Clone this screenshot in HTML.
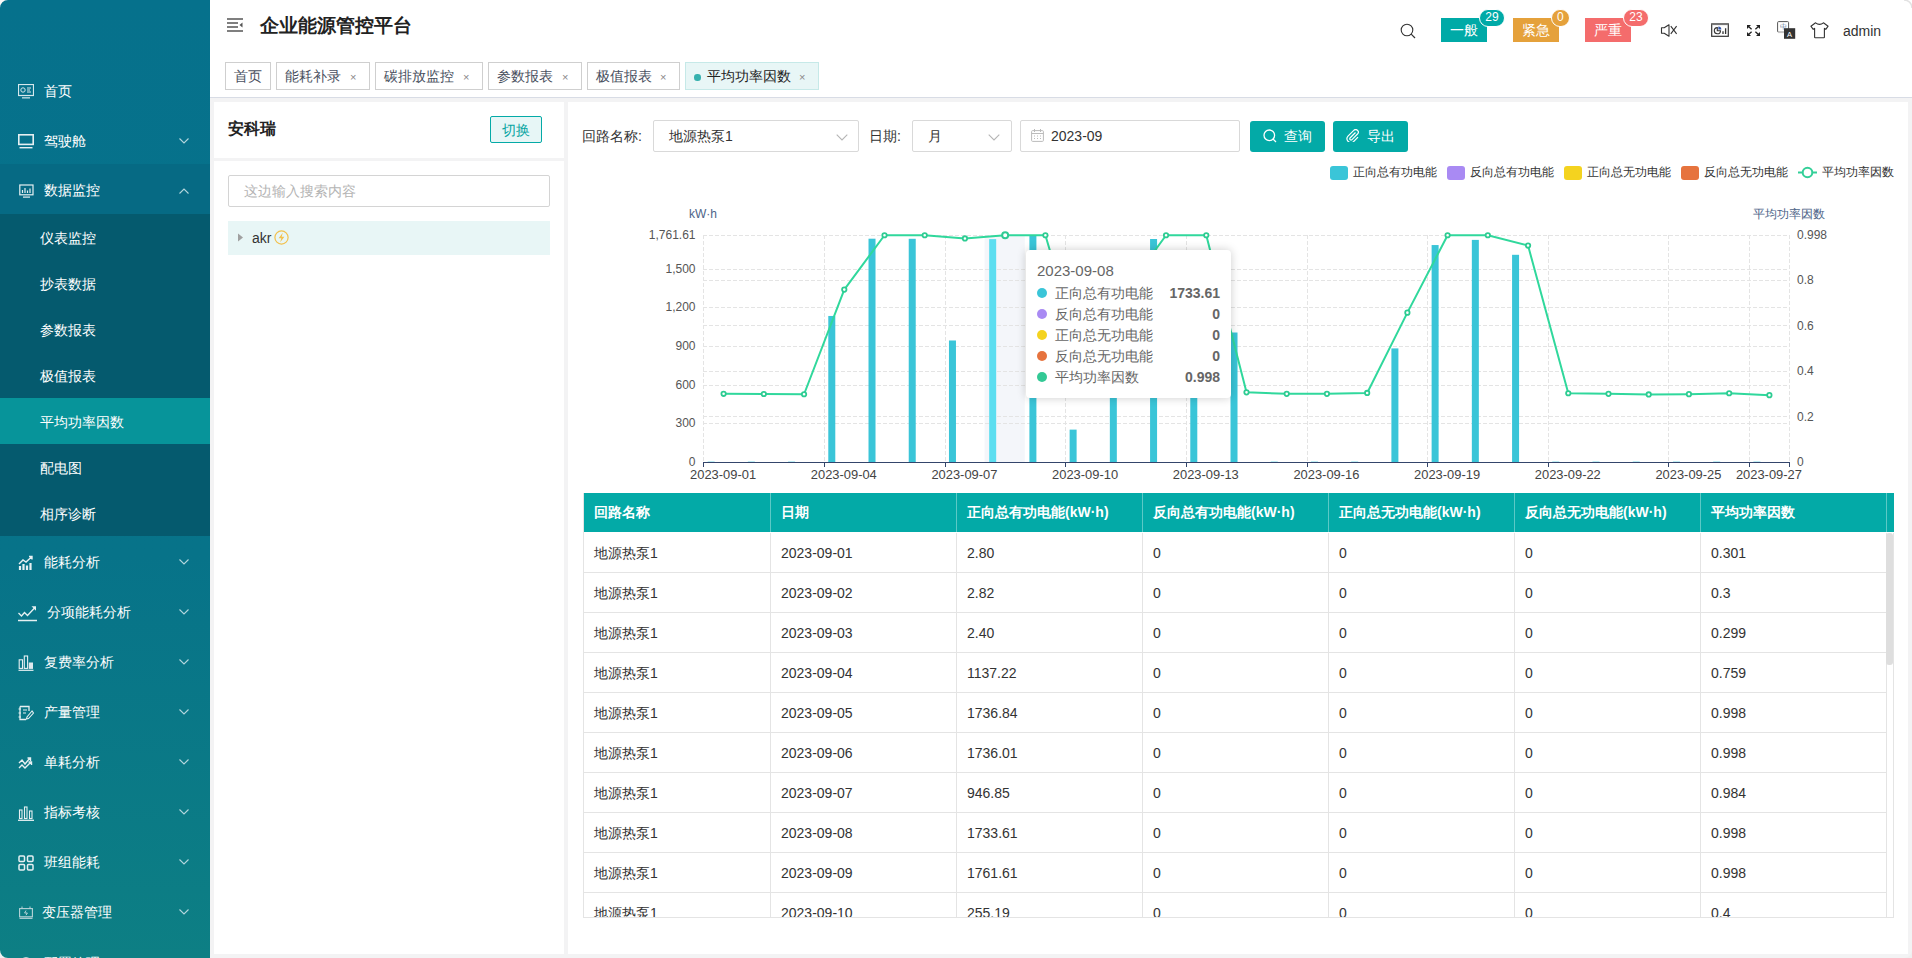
<!DOCTYPE html><html><head><meta charset="utf-8"><style>
*{box-sizing:border-box;margin:0;padding:0}
html,body{width:1912px;height:958px;overflow:hidden}
body{position:relative;background:#fff;font-family:'Liberation Sans',sans-serif;color:#333;font-size:14px}
.abs{position:absolute}
#side{position:absolute;left:0;top:0;width:210px;height:958px;background:linear-gradient(180deg,#06718c 0%,#077389 58%,#0d7f84 100%);overflow:hidden}
.mi{position:absolute;left:0;width:210px;height:50px;color:#fff;font-size:14px;line-height:50px}
.mi .t{position:absolute;left:44px;top:1px}
.mi svg.ic{position:absolute;left:18px;top:19px}
.mi .ar{position:absolute;left:179px;top:23px;width:10px;height:6px}
.si{position:absolute;left:0;width:210px;height:46px;color:#fff;font-size:14px;line-height:49px;padding-left:40px}
#hdr{position:absolute;left:210px;top:0;width:1702px;height:55px;background:#fff}
.tab{position:absolute;top:62px;height:28px;border:1px solid #cfcfcf;background:#fff;color:#495060;font-size:14px;line-height:26px;padding-left:8px}
.tab .x{position:absolute;top:1px;font-size:11px;color:#888}
#content{position:absolute;left:210px;top:98px;width:1702px;height:860px;background:#f3f3f4}
.card{position:absolute;background:#fff}
</style></head><body><div id="side">
<div class="abs" style="left:0;top:164px;width:210px;height:50px;background:#066a84"></div>
<div class="mi" style="top:65px"><svg class="ic" width="16" height="16" viewBox="0 0 16 16"><rect x="0.5" y="0.5" width="15" height="11" fill="none" stroke="#d6e8ec" stroke-width="1.2"/><rect x="4" y="13" width="8" height="1.6" fill="#9ccad4"/><circle cx="5" cy="6" r="2.2" fill="none" stroke="#d6e8ec" stroke-width="1"/><path d="M9 4h4M9 6h3M9 8h4" stroke="#d6e8ec" stroke-width="1"/></svg><span class="t">首页</span></div>
<div class="mi" style="top:115px"><svg class="ic" width="16" height="16" viewBox="0 0 16 16"><rect x="0.8" y="0.8" width="14.4" height="9.6" fill="none" stroke="#e6f0f2" stroke-width="1.6"/><rect x="1.5" y="13" width="13" height="1.4" fill="#e6f0f2"/></svg><span class="t">驾驶舱</span><svg class="ar" viewBox="0 0 10 6"><path d="M0.5 0.5 L5 5 L9.5 0.5" fill="none" stroke="#b4d6dd" stroke-width="1.1"/></svg></div>
<div class="mi" style="top:164px"><svg class="ic" width="16" height="16" viewBox="0 0 16 16"><rect x="1.8" y="2" width="13.2" height="9.8" fill="none" stroke="#e6f0f2" stroke-width="1.2"/><path d="M4.5 10V7M7 10V5M9.5 10V7.5M12 10V5.5" stroke="#e6f0f2" stroke-width="1.2"/><rect x="5" y="13.5" width="7" height="1.2" fill="#e6f0f2"/></svg><span class="t">数据监控</span><svg class="ar" style="top:24px" viewBox="0 0 10 6"><path d="M0.5 5.5 L5 1 L9.5 5.5" fill="none" stroke="#b4d6dd" stroke-width="1.1"/></svg></div>
<div class="abs" style="left:0;top:214px;width:210px;height:322px;background:#055a6e"></div>
<div class="si" style="top:214px;">仪表监控</div>
<div class="si" style="top:260px;">抄表数据</div>
<div class="si" style="top:306px;">参数报表</div>
<div class="si" style="top:352px;">极值报表</div>
<div class="si" style="top:398px;background:#07949a;">平均功率因数</div>
<div class="si" style="top:444px;">配电图</div>
<div class="si" style="top:490px;">相序诊断</div>
<div class="mi" style="top:536px"><svg class="ic" width="16" height="16" viewBox="0 0 16 16"><path d="M1 9L5 5L8 7L14 1.5M11 1.5H14V4.5" fill="none" stroke="#e6f0f2" stroke-width="1.4"/><path d="M2 15V11M5.5 15V9M9 15V10.5M12.5 15V8" stroke="#e6f0f2" stroke-width="2.2"/></svg><span class="t" style="left:44px">能耗分析</span><svg class="ar" viewBox="0 0 10 6"><path d="M0.5 0.5 L5 5 L9.5 0.5" fill="none" stroke="#b4d6dd" stroke-width="1.1"/></svg></div>
<div class="mi" style="top:586px"><svg class="ic" width="19" height="17" viewBox="0 0 19 17" style="left:18px;top:19px"><path d="M0.5 8L3.5 11L6.5 7.5L9.5 10.5L17 2.5" fill="none" stroke="#e6f0f2" stroke-width="1.3"/><path d="M13.5 1.2H18V5.7Z" fill="#e6f0f2"/><path d="M0 15.5H19" stroke="#e6f0f2" stroke-width="1.5"/></svg><span class="t" style="left:47px">分项能耗分析</span><svg class="ar" viewBox="0 0 10 6"><path d="M0.5 0.5 L5 5 L9.5 0.5" fill="none" stroke="#b4d6dd" stroke-width="1.1"/></svg></div>
<div class="mi" style="top:636px"><svg class="ic" width="16" height="16" viewBox="0 0 16 16"><rect x="1.2" y="4.8" width="3.3" height="8.6" fill="none" stroke="#e6f0f2" stroke-width="1.1"/><rect x="6.3" y="1" width="3.3" height="12.4" fill="none" stroke="#e6f0f2" stroke-width="1.1"/><rect x="10.8" y="7.5" width="4.2" height="6.4" fill="#dfe9ee"/><path d="M0.5 15.3H15.5" stroke="#e6f0f2" stroke-width="1.2"/></svg><span class="t" style="left:44px">复费率分析</span><svg class="ar" viewBox="0 0 10 6"><path d="M0.5 0.5 L5 5 L9.5 0.5" fill="none" stroke="#b4d6dd" stroke-width="1.1"/></svg></div>
<div class="mi" style="top:686px"><svg class="ic" width="16" height="16" viewBox="0 0 16 16"><path d="M2 1.5H11V6M2 1.5V14.5H8" fill="none" stroke="#e6f0f2" stroke-width="1.3"/><path d="M0.5 4H3M0.5 8H3M0.5 12H3" stroke="#e6f0f2" stroke-width="1.1"/><path d="M14 6L9 12L8.5 14L10.5 13.5L15.5 8Z" fill="none" stroke="#e6f0f2" stroke-width="1.1"/><path d="M5 5H9M5 8H8" stroke="#e6f0f2" stroke-width="1"/></svg><span class="t" style="left:44px">产量管理</span><svg class="ar" viewBox="0 0 10 6"><path d="M0.5 0.5 L5 5 L9.5 0.5" fill="none" stroke="#b4d6dd" stroke-width="1.1"/></svg></div>
<div class="mi" style="top:736px"><svg class="ic" width="16" height="16" viewBox="0 0 16 16"><path d="M1 8L4 5L7 9L12 3M9.5 3H12.5V6" fill="none" stroke="#e6f0f2" stroke-width="1.4"/><path d="M1 13L4 10L7 13L13 7M10.5 7H13.5V10" fill="none" stroke="#e6f0f2" stroke-width="1.4"/></svg><span class="t" style="left:44px">单耗分析</span><svg class="ar" viewBox="0 0 10 6"><path d="M0.5 0.5 L5 5 L9.5 0.5" fill="none" stroke="#b4d6dd" stroke-width="1.1"/></svg></div>
<div class="mi" style="top:786px"><svg class="ic" width="16" height="16" viewBox="0 0 16 16"><rect x="1.5" y="5" width="2.5" height="8.5" fill="none" stroke="#e6f0f2" stroke-width="1.1"/><rect x="6.5" y="2" width="2.5" height="11.5" fill="none" stroke="#e6f0f2" stroke-width="1.1"/><rect x="11.5" y="6" width="2.5" height="7.5" fill="none" stroke="#e6f0f2" stroke-width="1.1"/><path d="M0 15.3H16" stroke="#e6f0f2" stroke-width="1.3"/></svg><span class="t" style="left:44px">指标考核</span><svg class="ar" viewBox="0 0 10 6"><path d="M0.5 0.5 L5 5 L9.5 0.5" fill="none" stroke="#b4d6dd" stroke-width="1.1"/></svg></div>
<div class="mi" style="top:836px"><svg class="ic" width="16" height="16" viewBox="0 0 16 16"><rect x="1" y="1" width="5.5" height="5.5" rx="1" fill="none" stroke="#e6f0f2" stroke-width="1.5"/><rect x="9.5" y="1" width="5.5" height="5.5" rx="1" fill="none" stroke="#e6f0f2" stroke-width="1.5"/><rect x="1" y="9.5" width="5.5" height="5.5" rx="1" fill="none" stroke="#e6f0f2" stroke-width="1.5"/><rect x="9.5" y="9.5" width="5.5" height="5.5" rx="1" fill="none" stroke="#e6f0f2" stroke-width="1.5"/></svg><span class="t" style="left:44px">班组能耗</span><svg class="ar" viewBox="0 0 10 6"><path d="M0.5 0.5 L5 5 L9.5 0.5" fill="none" stroke="#b4d6dd" stroke-width="1.1"/></svg></div>
<div class="mi" style="top:886px"><svg class="ic" width="14" height="13" viewBox="0 0 14 13" style="left:19px;top:20px"><rect x="0.6" y="2.6" width="12.8" height="8.2" fill="none" stroke="#b8d4d8" stroke-width="1.1"/><path d="M3 0.5V2.6M11 0.5V2.6M7 4.5L5.6 7H8.4L7 9.2" stroke="#b8d4d8" stroke-width="1" fill="none"/><path d="M0.5 12.3H13.5" stroke="#b8d4d8" stroke-width="1.2"/></svg><span class="t" style="left:42px">变压器管理</span><svg class="ar" viewBox="0 0 10 6"><path d="M0.5 0.5 L5 5 L9.5 0.5" fill="none" stroke="#b4d6dd" stroke-width="1.1"/></svg></div>
<div class="mi" style="top:937px"><svg class="ic" width="16" height="16" viewBox="0 0 16 16"><circle cx="8" cy="8" r="6" fill="none" stroke="#e6f0f2" stroke-width="1.5"/></svg><span class="t">配置管理</span></div>
</div>
<div id="hdr">
<svg class="abs" style="left:17px;top:18px" width="16" height="14" viewBox="0 0 16 14"><path d="M0 1H16M0 5H11M0 9H11M0 13H16" stroke="#555" stroke-width="1.3"/><path d="M15.5 4.5L12.5 7L15.5 9.5Z" fill="#555"/></svg>
<div class="abs" style="left:50px;top:12px;font-size:19px;font-weight:bold;color:#222;line-height:28px">企业能源管控平台</div>
</div>
<svg class="abs" style="left:1400px;top:23px" width="17" height="17" viewBox="0 0 17 17"><circle cx="7" cy="7" r="5.8" fill="none" stroke="#333" stroke-width="1.1"/><path d="M11.2 11.2L15 15" stroke="#333" stroke-width="1.2"/></svg>
<div class="abs" style="left:1441px;top:18px;width:46px;height:24px;background:#00aaa7;color:#fff;font-size:14px;line-height:24px;text-align:center">一般</div>
<div class="abs" style="left:1479px;top:9px;min-width:26px;height:18px;border:1px solid #fff;border-radius:9px;background:#00aaa7;color:#fff;font-size:12px;line-height:15px;text-align:center;padding:0 5px">29</div>
<div class="abs" style="left:1513px;top:18px;width:46px;height:24px;background:#e5a13b;color:#fff;font-size:14px;line-height:24px;text-align:center">紧急</div>
<div class="abs" style="left:1551px;top:9px;min-width:18px;height:18px;border:1px solid #fff;border-radius:9px;background:#e5a13b;color:#fff;font-size:12px;line-height:15px;text-align:center;padding:0 5px">0</div>
<div class="abs" style="left:1585px;top:18px;width:46px;height:24px;background:#f46c6c;color:#fff;font-size:14px;line-height:24px;text-align:center">严重</div>
<div class="abs" style="left:1623px;top:9px;min-width:26px;height:18px;border:1px solid #fff;border-radius:9px;background:#f46c6c;color:#fff;font-size:12px;line-height:15px;text-align:center;padding:0 5px">23</div>
<svg class="abs" style="left:1660px;top:24px" width="18" height="13" viewBox="0 0 18 13"><path d="M1.5 3.8H4.2L9 0.8V12.2L4.2 9.2H1.5Z" fill="none" stroke="#333" stroke-width="1.1" stroke-linejoin="round"/><path d="M10.8 2.2L16.6 9.8M16.6 2.2L10.8 9.8" stroke="#333" stroke-width="1.1"/></svg>
<svg class="abs" style="left:1711px;top:23px" width="18" height="14" viewBox="0 0 18 14"><rect x="0.7" y="0.9" width="16.6" height="12.4" fill="none" stroke="#333" stroke-width="1.2"/><path d="M0.7 1.2H17.3" stroke="#777" stroke-width="1.8"/><path d="M6.3 4.6A3.1 3.1 0 1 0 9.5 7.7H6.3Z" fill="none" stroke="#333" stroke-width="1.1"/><path d="M7.3 3.6V6.6H10.3A3 3 0 0 0 7.3 3.6Z" fill="#35a"/><path d="M12 11V8.3M14.6 11V5.2" stroke="#333" stroke-width="1.3"/></svg>
<svg class="abs" style="left:1747px;top:25px" width="13" height="11" viewBox="0 0 13 11"><path d="M0 0H4L0 4Z M13 0H9L13 4Z M0 11H4L0 7Z M13 11H9L13 7Z" fill="#222"/><path d="M1.5 1.5L4.6 4.3M11.5 1.5L8.4 4.3M1.5 9.5L4.6 6.7M11.5 9.5L8.4 6.7" stroke="#222" stroke-width="1.3"/></svg>
<svg class="abs" style="left:1777px;top:21px" width="19" height="18" viewBox="0 0 19 18"><rect x="0.6" y="0.6" width="11" height="10.6" rx="1" fill="#fff" stroke="#555" stroke-width="1"/><path d="M1 11.6H11" stroke="#ccc" stroke-width="1"/><text x="6" y="8.3" font-size="7" text-anchor="middle" fill="#6a7fa0" font-family="Liberation Sans">中</text><rect x="7" y="7.2" width="11.2" height="10.6" fill="#333"/><text x="12.6" y="15.6" font-size="7.5" text-anchor="middle" fill="#fff" font-family="Liberation Sans">A</text></svg>
<svg class="abs" style="left:1810px;top:22px" width="19" height="17" viewBox="0 0 19 17"><path d="M5.6 0.8L0.9 4.2L3.2 7.3L4.6 6.4V15.2Q4.6 15.8 5.2 15.8H13.8Q14.4 15.8 14.4 15.2V6.4L15.8 7.3L18.1 4.2L13.4 0.8Q11.6 2.4 9.5 2.4Q7.4 2.4 5.6 0.8Z" fill="none" stroke="#333" stroke-width="1.1" stroke-linejoin="round"/></svg>
<div class="abs" style="left:1843px;top:21px;font-size:14px;line-height:20px;color:#333">admin</div>
<div class="tab" style="left:225px;width:46px;">
首页
</div>
<div class="tab" style="left:276px;width:94px;">
能耗补录
<span class="x" style="left:73px">×</span>
</div>
<div class="tab" style="left:375px;width:108px;">
碳排放监控
<span class="x" style="left:87px">×</span>
</div>
<div class="tab" style="left:488px;width:94px;">
参数报表
<span class="x" style="left:73px">×</span>
</div>
<div class="tab" style="left:587px;width:93px;">
极值报表
<span class="x" style="left:72px">×</span>
</div>
<div class="tab" style="left:685px;width:134px;background:#e8f6f6;border-color:#c6e9e8;color:#222;padding-left:21px;">
<span class="abs" style="left:8px;top:11px;width:6.5px;height:6.5px;border-radius:50%;background:#36b1ae"></span>
平均功率因数
<span class="x" style="left:113px">×</span>
</div>
<div class="abs" style="left:210px;top:97px;width:1702px;height:1px;background:#d8dce5"></div>
<div id="content"></div>
<div class="card" style="left:214px;top:102px;width:350px;height:56px"></div>
<div class="card" style="left:214px;top:161px;width:350px;height:793px"></div>
<div class="card" style="left:568px;top:102px;width:1340px;height:852px"></div>
<div class="abs" style="left:228px;top:118px;font-size:16px;font-weight:bold;color:#222;line-height:22px">安科瑞</div>
<div class="abs" style="left:490px;top:116px;width:52px;height:27px;border:1px solid #04aaa7;border-radius:2px;background:#e7f6f6;color:#0aa5a2;font-size:14px;line-height:27px;text-align:center">切换</div>
<div class="abs" style="left:228px;top:175px;width:322px;height:32px;border:1px solid #d4d4d4;border-radius:2px;background:#fff;color:#b4b4b4;font-size:14px;line-height:30px;padding-left:15px">这边输入搜索内容</div>
<div class="abs" style="left:228px;top:221px;width:322px;height:34px;background:#e8f6f6"></div>
<svg class="abs" style="left:237px;top:233px" width="7" height="9" viewBox="0 0 7 9"><path d="M1 0.5L6 4.5L1 8.5Z" fill="#a0a0a0"/></svg>
<div class="abs" style="left:252px;top:228px;font-size:14px;line-height:20px;color:#333">akr</div>
<svg class="abs" style="left:274px;top:230px" width="15" height="15" viewBox="0 0 15 15"><circle cx="7.5" cy="7.5" r="6.6" fill="none" stroke="#f2c14e" stroke-width="1.2"/><path d="M8.8 2.8L4.6 8.2H7.3L6.2 12.2L10.4 6.8H7.7Z" fill="#f2c14e"/></svg>
<div class="abs" style="left:582px;top:126px;font-size:14px;line-height:20px;color:#333">回路名称:</div>
<div class="abs" style="left:653px;top:120px;width:206px;height:32px;border:1px solid #d9d9d9;border-radius:2px;background:#fff;font-size:14px;line-height:30px;padding-left:15px;color:#333">地源热泵1</div>
<svg class="abs" style="left:836px;top:134px" width="12" height="7" viewBox="0 0 12 7"><path d="M0.7 0.7L6 6L11.3 0.7" fill="none" stroke="#b5b5b5" stroke-width="1.1"/></svg>
<div class="abs" style="left:869px;top:126px;font-size:14px;line-height:20px;color:#333">日期:</div>
<div class="abs" style="left:912px;top:120px;width:100px;height:32px;border:1px solid #d9d9d9;border-radius:2px;background:#fff;font-size:14px;line-height:30px;padding-left:15px;color:#333">月</div>
<svg class="abs" style="left:988px;top:134px" width="12" height="7" viewBox="0 0 12 7"><path d="M0.7 0.7L6 6L11.3 0.7" fill="none" stroke="#b5b5b5" stroke-width="1.1"/></svg>
<div class="abs" style="left:1020px;top:120px;width:220px;height:32px;border:1px solid #d9d9d9;border-radius:2px;background:#fff;font-size:14px;line-height:30px;padding-left:30px;color:#333">2023-09</div>
<svg class="abs" style="left:1031px;top:129px" width="13" height="13" viewBox="0 0 13 13"><rect x="0.6" y="1.6" width="11.8" height="10.8" rx="1" fill="none" stroke="#bbb" stroke-width="1"/><path d="M0.6 4.5H12.4M3.5 0V3M9.5 0V3M3 7H4M6 7H7M9 7H10M3 9.5H4M6 9.5H7M9 9.5H10" stroke="#bbb" stroke-width="1"/></svg>
<div class="abs" style="left:1250px;top:121px;width:75px;height:31px;border-radius:3px;background:#03aaa7;color:#fff;font-size:14px;line-height:31px;padding-left:34px">查询</div>
<div class="abs" style="left:1333px;top:121px;width:75px;height:31px;border-radius:3px;background:#03aaa7;color:#fff;font-size:14px;line-height:31px;padding-left:34px">导出</div>
<svg class="abs" style="left:1263px;top:129px" width="14" height="14" viewBox="0 0 14 14"><circle cx="6.3" cy="6.3" r="5.3" fill="none" stroke="#fff" stroke-width="1.3"/><path d="M10 10L13 13" stroke="#fff" stroke-width="1.3"/></svg>
<svg class="abs" style="left:1346px;top:129px" width="13" height="13" viewBox="0 0 13 13"><path d="M9.5 3.5L4 9a1.3 1.3 0 0 0 1.8 1.8L11.5 5a2.6 2.6 0 0 0-3.7-3.7L2 7.2a3.9 3.9 0 0 0 5.5 5.5L12 8.2" fill="none" stroke="#fff" stroke-width="1.2"/></svg>
<div class="abs" style="left:1330px;top:166px;width:18px;height:14px;border-radius:3px;background:#3ac5d8"></div>
<div class="abs" style="left:1353px;top:163px;font-size:12px;line-height:18px;color:#333">正向总有功电能</div>
<div class="abs" style="left:1447px;top:166px;width:18px;height:14px;border-radius:3px;background:#a98af3"></div>
<div class="abs" style="left:1470px;top:163px;font-size:12px;line-height:18px;color:#333">反向总有功电能</div>
<div class="abs" style="left:1564px;top:166px;width:18px;height:14px;border-radius:3px;background:#f4d31f"></div>
<div class="abs" style="left:1587px;top:163px;font-size:12px;line-height:18px;color:#333">正向总无功电能</div>
<div class="abs" style="left:1681px;top:166px;width:18px;height:14px;border-radius:3px;background:#e6733e"></div>
<div class="abs" style="left:1704px;top:163px;font-size:12px;line-height:18px;color:#333">反向总无功电能</div>
<svg class="abs" style="left:1798px;top:165px" width="19" height="14" viewBox="0 0 19 14"><path d="M0 7.5H19" stroke="#33cf98" stroke-width="2"/><circle cx="9.5" cy="7.5" r="4.8" fill="#fff" stroke="#33cf98" stroke-width="2"/></svg>
<div class="abs" style="left:1822px;top:163px;font-size:12px;line-height:18px;color:#333">平均功率因数</div>
<svg class="abs" style="left:0;top:0" width="1912" height="958" viewBox="0 0 1912 958"><rect x="984.56" y="235.0" width="40.22" height="227.0" fill="#f4f6fa"/><path d="M703.0 423.5H1789.0" stroke="#e4e4e4" stroke-width="1" stroke-dasharray="4 2"/><path d="M703.0 385.5H1789.0" stroke="#e4e4e4" stroke-width="1" stroke-dasharray="4 2"/><path d="M703.0 346.5H1789.0" stroke="#e4e4e4" stroke-width="1" stroke-dasharray="4 2"/><path d="M703.0 307.5H1789.0" stroke="#e4e4e4" stroke-width="1" stroke-dasharray="4 2"/><path d="M703.0 269.5H1789.0" stroke="#e4e4e4" stroke-width="1" stroke-dasharray="4 2"/><path d="M703.0 235.5H1789.0" stroke="#e4e4e4" stroke-width="1" stroke-dasharray="4 2"/><path d="M703.0 416.5H1789.0" stroke="#e4e4e4" stroke-width="1" stroke-dasharray="4 2"/><path d="M703.0 371.5H1789.0" stroke="#e4e4e4" stroke-width="1" stroke-dasharray="4 2"/><path d="M703.0 325.5H1789.0" stroke="#e4e4e4" stroke-width="1" stroke-dasharray="4 2"/><path d="M703.0 280.5H1789.0" stroke="#e4e4e4" stroke-width="1" stroke-dasharray="4 2"/><path d="M703.5 235.0V462.0" stroke="#e4e4e4" stroke-width="1" stroke-dasharray="4 2"/><path d="M824.5 235.0V462.0" stroke="#e4e4e4" stroke-width="1" stroke-dasharray="4 2"/><path d="M945.5 235.0V462.0" stroke="#e4e4e4" stroke-width="1" stroke-dasharray="4 2"/><path d="M1065.5 235.0V462.0" stroke="#e4e4e4" stroke-width="1" stroke-dasharray="4 2"/><path d="M1186.5 235.0V462.0" stroke="#e4e4e4" stroke-width="1" stroke-dasharray="4 2"/><path d="M1307.5 235.0V462.0" stroke="#e4e4e4" stroke-width="1" stroke-dasharray="4 2"/><path d="M1427.5 235.0V462.0" stroke="#e4e4e4" stroke-width="1" stroke-dasharray="4 2"/><path d="M1548.5 235.0V462.0" stroke="#e4e4e4" stroke-width="1" stroke-dasharray="4 2"/><path d="M1668.5 235.0V462.0" stroke="#e4e4e4" stroke-width="1" stroke-dasharray="4 2"/><path d="M1749.5 235.0V462.0" stroke="#e4e4e4" stroke-width="1" stroke-dasharray="4 2"/><path d="M1789.5 235.0V462.0" stroke="#e4e4e4" stroke-width="1" stroke-dasharray="4 2"/><text x="695.5" y="466.0" text-anchor="end" font-size="12" fill="#555" font-family="Liberation Sans">0</text><text x="695.5" y="427.3" text-anchor="end" font-size="12" fill="#555" font-family="Liberation Sans">300</text><text x="695.5" y="388.7" text-anchor="end" font-size="12" fill="#555" font-family="Liberation Sans">600</text><text x="695.5" y="350.0" text-anchor="end" font-size="12" fill="#555" font-family="Liberation Sans">900</text><text x="695.5" y="311.4" text-anchor="end" font-size="12" fill="#555" font-family="Liberation Sans">1,200</text><text x="695.5" y="272.7" text-anchor="end" font-size="12" fill="#555" font-family="Liberation Sans">1,500</text><text x="695.5" y="239.0" text-anchor="end" font-size="12" fill="#555" font-family="Liberation Sans">1,761.61</text><text x="1797" y="466.0" font-size="12" fill="#555" font-family="Liberation Sans">0</text><text x="1797" y="420.5" font-size="12" fill="#555" font-family="Liberation Sans">0.2</text><text x="1797" y="375.0" font-size="12" fill="#555" font-family="Liberation Sans">0.4</text><text x="1797" y="329.5" font-size="12" fill="#555" font-family="Liberation Sans">0.6</text><text x="1797" y="284.0" font-size="12" fill="#555" font-family="Liberation Sans">0.8</text><text x="1797" y="239.0" font-size="12" fill="#555" font-family="Liberation Sans">0.998</text><text x="703" y="218" text-anchor="middle" font-size="12" fill="#4d6488" font-family="Liberation Sans">kW·h</text><text x="1789" y="217.5" text-anchor="middle" font-size="12" fill="#4d6488" font-family="Liberation Sans">平均功率因数</text><text x="690.1" y="479" textLength="66" lengthAdjust="spacingAndGlyphs" font-size="12.5" fill="#444" font-family="Liberation Sans">2023-09-01</text><text x="810.8" y="479" textLength="66" lengthAdjust="spacingAndGlyphs" font-size="12.5" fill="#444" font-family="Liberation Sans">2023-09-04</text><text x="931.4" y="479" textLength="66" lengthAdjust="spacingAndGlyphs" font-size="12.5" fill="#444" font-family="Liberation Sans">2023-09-07</text><text x="1052.1" y="479" textLength="66" lengthAdjust="spacingAndGlyphs" font-size="12.5" fill="#444" font-family="Liberation Sans">2023-09-10</text><text x="1172.8" y="479" textLength="66" lengthAdjust="spacingAndGlyphs" font-size="12.5" fill="#444" font-family="Liberation Sans">2023-09-13</text><text x="1293.4" y="479" textLength="66" lengthAdjust="spacingAndGlyphs" font-size="12.5" fill="#444" font-family="Liberation Sans">2023-09-16</text><text x="1414.1" y="479" textLength="66" lengthAdjust="spacingAndGlyphs" font-size="12.5" fill="#444" font-family="Liberation Sans">2023-09-19</text><text x="1534.8" y="479" textLength="66" lengthAdjust="spacingAndGlyphs" font-size="12.5" fill="#444" font-family="Liberation Sans">2023-09-22</text><text x="1655.4" y="479" textLength="66" lengthAdjust="spacingAndGlyphs" font-size="12.5" fill="#444" font-family="Liberation Sans">2023-09-25</text><text x="1735.9" y="479" textLength="66" lengthAdjust="spacingAndGlyphs" font-size="12.5" fill="#444" font-family="Liberation Sans">2023-09-27</text><rect x="707.62" y="461.0" width="7.00" height="1" fill="#bfeef5"/><rect x="747.84" y="461.0" width="7.00" height="1" fill="#bfeef5"/><rect x="788.07" y="461.0" width="7.00" height="1" fill="#bfeef5"/><rect x="828.29" y="315.96" width="7.00" height="146.54" fill="#3ac5d8"/><rect x="868.51" y="238.69" width="7.00" height="223.81" fill="#3ac5d8"/><rect x="908.73" y="238.80" width="7.00" height="223.70" fill="#3ac5d8"/><rect x="948.96" y="340.49" width="7.00" height="122.01" fill="#3ac5d8"/><rect x="989.18" y="239.11" width="7.00" height="223.39" fill="#5cdef0"/><rect x="1029.40" y="235.50" width="7.00" height="227.00" fill="#3ac5d8"/><rect x="1069.62" y="429.62" width="7.00" height="32.88" fill="#3ac5d8"/><rect x="1109.84" y="333.64" width="7.00" height="128.86" fill="#3ac5d8"/><rect x="1150.07" y="239.01" width="7.00" height="223.49" fill="#3ac5d8"/><rect x="1190.29" y="333.64" width="7.00" height="128.86" fill="#3ac5d8"/><rect x="1230.51" y="332.51" width="7.00" height="129.99" fill="#3ac5d8"/><rect x="1270.73" y="461.0" width="7.00" height="1" fill="#bfeef5"/><rect x="1310.96" y="461.0" width="7.00" height="1" fill="#bfeef5"/><rect x="1351.18" y="461.0" width="7.00" height="1" fill="#bfeef5"/><rect x="1391.40" y="348.40" width="7.00" height="114.10" fill="#3ac5d8"/><rect x="1431.62" y="245.05" width="7.00" height="217.45" fill="#3ac5d8"/><rect x="1471.84" y="239.90" width="7.00" height="222.60" fill="#3ac5d8"/><rect x="1512.07" y="254.80" width="7.00" height="207.70" fill="#3ac5d8"/><rect x="1552.29" y="461.0" width="7.00" height="1" fill="#bfeef5"/><rect x="1592.51" y="461.0" width="7.00" height="1" fill="#bfeef5"/><rect x="1632.73" y="461.0" width="7.00" height="1" fill="#bfeef5"/><rect x="1672.96" y="461.0" width="7.00" height="1" fill="#bfeef5"/><rect x="1713.18" y="461.0" width="7.00" height="1" fill="#bfeef5"/><rect x="1753.40" y="461.0" width="7.00" height="1" fill="#bfeef5"/><path d="M703.0 462.5H1789.5" stroke="#34456b" stroke-width="1"/><path d="M703.5 462V467" stroke="#34456b" stroke-width="1"/><path d="M824.5 462V467" stroke="#34456b" stroke-width="1"/><path d="M945.5 462V467" stroke="#34456b" stroke-width="1"/><path d="M1065.5 462V467" stroke="#34456b" stroke-width="1"/><path d="M1186.5 462V467" stroke="#34456b" stroke-width="1"/><path d="M1307.5 462V467" stroke="#34456b" stroke-width="1"/><path d="M1427.5 462V467" stroke="#34456b" stroke-width="1"/><path d="M1548.5 462V467" stroke="#34456b" stroke-width="1"/><path d="M1668.5 462V467" stroke="#34456b" stroke-width="1"/><path d="M1749.5 462V467" stroke="#34456b" stroke-width="1"/><path d="M1789.5 462V467" stroke="#34456b" stroke-width="1"/><polyline points="723.61,393.79 763.83,394.01 804.06,394.24 844.28,289.61 884.50,235.25 924.72,235.25 964.94,238.43 1005.17,235.25 1045.39,235.25 1085.61,371.27 1125.83,290.52 1166.06,235.25 1206.28,235.25 1246.50,392.35 1286.72,393.85 1326.94,393.85 1367.17,392.94 1407.39,312.65 1447.61,235.25 1487.83,235.25 1528.06,245.55 1568.28,393.24 1608.50,393.85 1648.72,394.45 1688.94,394.15 1729.17,393.24 1769.39,395.15" fill="none" stroke="#30d89c" stroke-width="2" stroke-linejoin="round"/><circle cx="723.61" cy="393.79" r="2.2" fill="#fff" stroke="#2dcc92" stroke-width="1.8"/><circle cx="763.83" cy="394.01" r="2.2" fill="#fff" stroke="#2dcc92" stroke-width="1.8"/><circle cx="804.06" cy="394.24" r="2.2" fill="#fff" stroke="#2dcc92" stroke-width="1.8"/><circle cx="844.28" cy="289.61" r="2.2" fill="#fff" stroke="#2dcc92" stroke-width="1.8"/><circle cx="884.50" cy="235.25" r="2.2" fill="#fff" stroke="#2dcc92" stroke-width="1.8"/><circle cx="924.72" cy="235.25" r="2.2" fill="#fff" stroke="#2dcc92" stroke-width="1.8"/><circle cx="964.94" cy="238.43" r="2.2" fill="#fff" stroke="#2dcc92" stroke-width="1.8"/><circle cx="1005.17" cy="235.25" r="3" fill="#fff" stroke="#2fca93" stroke-width="2"/><circle cx="1045.39" cy="235.25" r="2.2" fill="#fff" stroke="#2dcc92" stroke-width="1.8"/><circle cx="1085.61" cy="371.27" r="2.2" fill="#fff" stroke="#2dcc92" stroke-width="1.8"/><circle cx="1125.83" cy="290.52" r="2.2" fill="#fff" stroke="#2dcc92" stroke-width="1.8"/><circle cx="1166.06" cy="235.25" r="2.2" fill="#fff" stroke="#2dcc92" stroke-width="1.8"/><circle cx="1206.28" cy="235.25" r="2.2" fill="#fff" stroke="#2dcc92" stroke-width="1.8"/><circle cx="1246.50" cy="392.35" r="2.2" fill="#fff" stroke="#2dcc92" stroke-width="1.8"/><circle cx="1286.72" cy="393.85" r="2.2" fill="#fff" stroke="#2dcc92" stroke-width="1.8"/><circle cx="1326.94" cy="393.85" r="2.2" fill="#fff" stroke="#2dcc92" stroke-width="1.8"/><circle cx="1367.17" cy="392.94" r="2.2" fill="#fff" stroke="#2dcc92" stroke-width="1.8"/><circle cx="1407.39" cy="312.65" r="2.2" fill="#fff" stroke="#2dcc92" stroke-width="1.8"/><circle cx="1447.61" cy="235.25" r="2.2" fill="#fff" stroke="#2dcc92" stroke-width="1.8"/><circle cx="1487.83" cy="235.25" r="2.2" fill="#fff" stroke="#2dcc92" stroke-width="1.8"/><circle cx="1528.06" cy="245.55" r="2.2" fill="#fff" stroke="#2dcc92" stroke-width="1.8"/><circle cx="1568.28" cy="393.24" r="2.2" fill="#fff" stroke="#2dcc92" stroke-width="1.8"/><circle cx="1608.50" cy="393.85" r="2.2" fill="#fff" stroke="#2dcc92" stroke-width="1.8"/><circle cx="1648.72" cy="394.45" r="2.2" fill="#fff" stroke="#2dcc92" stroke-width="1.8"/><circle cx="1688.94" cy="394.15" r="2.2" fill="#fff" stroke="#2dcc92" stroke-width="1.8"/><circle cx="1729.17" cy="393.24" r="2.2" fill="#fff" stroke="#2dcc92" stroke-width="1.8"/><circle cx="1769.39" cy="395.15" r="2.2" fill="#fff" stroke="#2dcc92" stroke-width="1.8"/></svg>
<div class="abs" style="left:1026px;top:250px;width:205px;height:148px;background:#fff;border-radius:4px;box-shadow:0 0 10px rgba(0,0,0,0.2)">
<div class="abs" style="left:11px;top:11px;font-size:15px;line-height:20px;color:#666">2023-09-08</div>
<span class="abs" style="left:11px;top:38px;width:10px;height:10px;border-radius:50%;background:#3ac5d8"></span>
<span class="abs" style="left:29px;top:33px;font-size:14px;line-height:20px;color:#666">正向总有功电能</span>
<span class="abs" style="right:11px;top:33px;font-size:14px;line-height:20px;color:#666;font-weight:bold">1733.61</span>
<span class="abs" style="left:11px;top:59px;width:10px;height:10px;border-radius:50%;background:#a98af3"></span>
<span class="abs" style="left:29px;top:54px;font-size:14px;line-height:20px;color:#666">反向总有功电能</span>
<span class="abs" style="right:11px;top:54px;font-size:14px;line-height:20px;color:#666;font-weight:bold">0</span>
<span class="abs" style="left:11px;top:80px;width:10px;height:10px;border-radius:50%;background:#f4d31f"></span>
<span class="abs" style="left:29px;top:75px;font-size:14px;line-height:20px;color:#666">正向总无功电能</span>
<span class="abs" style="right:11px;top:75px;font-size:14px;line-height:20px;color:#666;font-weight:bold">0</span>
<span class="abs" style="left:11px;top:101px;width:10px;height:10px;border-radius:50%;background:#e6733e"></span>
<span class="abs" style="left:29px;top:96px;font-size:14px;line-height:20px;color:#666">反向总无功电能</span>
<span class="abs" style="right:11px;top:96px;font-size:14px;line-height:20px;color:#666;font-weight:bold">0</span>
<span class="abs" style="left:11px;top:122px;width:10px;height:10px;border-radius:50%;background:#33c995"></span>
<span class="abs" style="left:29px;top:117px;font-size:14px;line-height:20px;color:#666">平均功率因数</span>
<span class="abs" style="right:11px;top:117px;font-size:14px;line-height:20px;color:#666;font-weight:bold">0.998</span>
</div>
<div class="abs" style="left:583px;top:493px;width:1311px;height:425px;overflow:hidden;border-left:1px solid #e4e4e4">
<div class="abs" style="left:0;top:0;width:1310px;height:39px;background:#03aaa7"></div>
<div class="abs" style="left:0px;top:0;width:187px;height:39px;border-right:1px solid #5cc9c6;padding-left:10px;color:#fff;font-weight:bold;font-size:14px;line-height:39px">回路名称</div>
<div class="abs" style="left:186px;top:0;width:187px;height:39px;border-right:1px solid #5cc9c6;padding-left:11px;color:#fff;font-weight:bold;font-size:14px;line-height:39px">日期</div>
<div class="abs" style="left:372px;top:0;width:187px;height:39px;border-right:1px solid #5cc9c6;padding-left:11px;color:#fff;font-weight:bold;font-size:14px;line-height:39px">正向总有功电能(kW·h)</div>
<div class="abs" style="left:558px;top:0;width:187px;height:39px;border-right:1px solid #5cc9c6;padding-left:11px;color:#fff;font-weight:bold;font-size:14px;line-height:39px">反向总有功电能(kW·h)</div>
<div class="abs" style="left:744px;top:0;width:187px;height:39px;border-right:1px solid #5cc9c6;padding-left:11px;color:#fff;font-weight:bold;font-size:14px;line-height:39px">正向总无功电能(kW·h)</div>
<div class="abs" style="left:930px;top:0;width:187px;height:39px;border-right:1px solid #5cc9c6;padding-left:11px;color:#fff;font-weight:bold;font-size:14px;line-height:39px">反向总无功电能(kW·h)</div>
<div class="abs" style="left:1116px;top:0;width:187px;height:39px;border-right:1px solid #5cc9c6;padding-left:11px;color:#fff;font-weight:bold;font-size:14px;line-height:39px">平均功率因数</div>
<div class="abs" style="left:0px;top:40px;width:187px;height:40px;border-right:1px solid #e4e4e4;border-bottom:1px solid #e4e4e4;padding-left:10px;color:#333;font-size:14px;line-height:40px">地源热泵1</div>
<div class="abs" style="left:186px;top:40px;width:187px;height:40px;border-right:1px solid #e4e4e4;border-bottom:1px solid #e4e4e4;padding-left:11px;color:#333;font-size:14px;line-height:40px">2023-09-01</div>
<div class="abs" style="left:372px;top:40px;width:187px;height:40px;border-right:1px solid #e4e4e4;border-bottom:1px solid #e4e4e4;padding-left:11px;color:#333;font-size:14px;line-height:40px">2.80</div>
<div class="abs" style="left:558px;top:40px;width:187px;height:40px;border-right:1px solid #e4e4e4;border-bottom:1px solid #e4e4e4;padding-left:11px;color:#333;font-size:14px;line-height:40px">0</div>
<div class="abs" style="left:744px;top:40px;width:187px;height:40px;border-right:1px solid #e4e4e4;border-bottom:1px solid #e4e4e4;padding-left:11px;color:#333;font-size:14px;line-height:40px">0</div>
<div class="abs" style="left:930px;top:40px;width:187px;height:40px;border-right:1px solid #e4e4e4;border-bottom:1px solid #e4e4e4;padding-left:11px;color:#333;font-size:14px;line-height:40px">0</div>
<div class="abs" style="left:1116px;top:40px;width:187px;height:40px;border-right:1px solid #e4e4e4;border-bottom:1px solid #e4e4e4;padding-left:11px;color:#333;font-size:14px;line-height:40px">0.301</div>
<div class="abs" style="left:0px;top:80px;width:187px;height:40px;border-right:1px solid #e4e4e4;border-bottom:1px solid #e4e4e4;padding-left:10px;color:#333;font-size:14px;line-height:40px">地源热泵1</div>
<div class="abs" style="left:186px;top:80px;width:187px;height:40px;border-right:1px solid #e4e4e4;border-bottom:1px solid #e4e4e4;padding-left:11px;color:#333;font-size:14px;line-height:40px">2023-09-02</div>
<div class="abs" style="left:372px;top:80px;width:187px;height:40px;border-right:1px solid #e4e4e4;border-bottom:1px solid #e4e4e4;padding-left:11px;color:#333;font-size:14px;line-height:40px">2.82</div>
<div class="abs" style="left:558px;top:80px;width:187px;height:40px;border-right:1px solid #e4e4e4;border-bottom:1px solid #e4e4e4;padding-left:11px;color:#333;font-size:14px;line-height:40px">0</div>
<div class="abs" style="left:744px;top:80px;width:187px;height:40px;border-right:1px solid #e4e4e4;border-bottom:1px solid #e4e4e4;padding-left:11px;color:#333;font-size:14px;line-height:40px">0</div>
<div class="abs" style="left:930px;top:80px;width:187px;height:40px;border-right:1px solid #e4e4e4;border-bottom:1px solid #e4e4e4;padding-left:11px;color:#333;font-size:14px;line-height:40px">0</div>
<div class="abs" style="left:1116px;top:80px;width:187px;height:40px;border-right:1px solid #e4e4e4;border-bottom:1px solid #e4e4e4;padding-left:11px;color:#333;font-size:14px;line-height:40px">0.3</div>
<div class="abs" style="left:0px;top:120px;width:187px;height:40px;border-right:1px solid #e4e4e4;border-bottom:1px solid #e4e4e4;padding-left:10px;color:#333;font-size:14px;line-height:40px">地源热泵1</div>
<div class="abs" style="left:186px;top:120px;width:187px;height:40px;border-right:1px solid #e4e4e4;border-bottom:1px solid #e4e4e4;padding-left:11px;color:#333;font-size:14px;line-height:40px">2023-09-03</div>
<div class="abs" style="left:372px;top:120px;width:187px;height:40px;border-right:1px solid #e4e4e4;border-bottom:1px solid #e4e4e4;padding-left:11px;color:#333;font-size:14px;line-height:40px">2.40</div>
<div class="abs" style="left:558px;top:120px;width:187px;height:40px;border-right:1px solid #e4e4e4;border-bottom:1px solid #e4e4e4;padding-left:11px;color:#333;font-size:14px;line-height:40px">0</div>
<div class="abs" style="left:744px;top:120px;width:187px;height:40px;border-right:1px solid #e4e4e4;border-bottom:1px solid #e4e4e4;padding-left:11px;color:#333;font-size:14px;line-height:40px">0</div>
<div class="abs" style="left:930px;top:120px;width:187px;height:40px;border-right:1px solid #e4e4e4;border-bottom:1px solid #e4e4e4;padding-left:11px;color:#333;font-size:14px;line-height:40px">0</div>
<div class="abs" style="left:1116px;top:120px;width:187px;height:40px;border-right:1px solid #e4e4e4;border-bottom:1px solid #e4e4e4;padding-left:11px;color:#333;font-size:14px;line-height:40px">0.299</div>
<div class="abs" style="left:0px;top:160px;width:187px;height:40px;border-right:1px solid #e4e4e4;border-bottom:1px solid #e4e4e4;padding-left:10px;color:#333;font-size:14px;line-height:40px">地源热泵1</div>
<div class="abs" style="left:186px;top:160px;width:187px;height:40px;border-right:1px solid #e4e4e4;border-bottom:1px solid #e4e4e4;padding-left:11px;color:#333;font-size:14px;line-height:40px">2023-09-04</div>
<div class="abs" style="left:372px;top:160px;width:187px;height:40px;border-right:1px solid #e4e4e4;border-bottom:1px solid #e4e4e4;padding-left:11px;color:#333;font-size:14px;line-height:40px">1137.22</div>
<div class="abs" style="left:558px;top:160px;width:187px;height:40px;border-right:1px solid #e4e4e4;border-bottom:1px solid #e4e4e4;padding-left:11px;color:#333;font-size:14px;line-height:40px">0</div>
<div class="abs" style="left:744px;top:160px;width:187px;height:40px;border-right:1px solid #e4e4e4;border-bottom:1px solid #e4e4e4;padding-left:11px;color:#333;font-size:14px;line-height:40px">0</div>
<div class="abs" style="left:930px;top:160px;width:187px;height:40px;border-right:1px solid #e4e4e4;border-bottom:1px solid #e4e4e4;padding-left:11px;color:#333;font-size:14px;line-height:40px">0</div>
<div class="abs" style="left:1116px;top:160px;width:187px;height:40px;border-right:1px solid #e4e4e4;border-bottom:1px solid #e4e4e4;padding-left:11px;color:#333;font-size:14px;line-height:40px">0.759</div>
<div class="abs" style="left:0px;top:200px;width:187px;height:40px;border-right:1px solid #e4e4e4;border-bottom:1px solid #e4e4e4;padding-left:10px;color:#333;font-size:14px;line-height:40px">地源热泵1</div>
<div class="abs" style="left:186px;top:200px;width:187px;height:40px;border-right:1px solid #e4e4e4;border-bottom:1px solid #e4e4e4;padding-left:11px;color:#333;font-size:14px;line-height:40px">2023-09-05</div>
<div class="abs" style="left:372px;top:200px;width:187px;height:40px;border-right:1px solid #e4e4e4;border-bottom:1px solid #e4e4e4;padding-left:11px;color:#333;font-size:14px;line-height:40px">1736.84</div>
<div class="abs" style="left:558px;top:200px;width:187px;height:40px;border-right:1px solid #e4e4e4;border-bottom:1px solid #e4e4e4;padding-left:11px;color:#333;font-size:14px;line-height:40px">0</div>
<div class="abs" style="left:744px;top:200px;width:187px;height:40px;border-right:1px solid #e4e4e4;border-bottom:1px solid #e4e4e4;padding-left:11px;color:#333;font-size:14px;line-height:40px">0</div>
<div class="abs" style="left:930px;top:200px;width:187px;height:40px;border-right:1px solid #e4e4e4;border-bottom:1px solid #e4e4e4;padding-left:11px;color:#333;font-size:14px;line-height:40px">0</div>
<div class="abs" style="left:1116px;top:200px;width:187px;height:40px;border-right:1px solid #e4e4e4;border-bottom:1px solid #e4e4e4;padding-left:11px;color:#333;font-size:14px;line-height:40px">0.998</div>
<div class="abs" style="left:0px;top:240px;width:187px;height:40px;border-right:1px solid #e4e4e4;border-bottom:1px solid #e4e4e4;padding-left:10px;color:#333;font-size:14px;line-height:40px">地源热泵1</div>
<div class="abs" style="left:186px;top:240px;width:187px;height:40px;border-right:1px solid #e4e4e4;border-bottom:1px solid #e4e4e4;padding-left:11px;color:#333;font-size:14px;line-height:40px">2023-09-06</div>
<div class="abs" style="left:372px;top:240px;width:187px;height:40px;border-right:1px solid #e4e4e4;border-bottom:1px solid #e4e4e4;padding-left:11px;color:#333;font-size:14px;line-height:40px">1736.01</div>
<div class="abs" style="left:558px;top:240px;width:187px;height:40px;border-right:1px solid #e4e4e4;border-bottom:1px solid #e4e4e4;padding-left:11px;color:#333;font-size:14px;line-height:40px">0</div>
<div class="abs" style="left:744px;top:240px;width:187px;height:40px;border-right:1px solid #e4e4e4;border-bottom:1px solid #e4e4e4;padding-left:11px;color:#333;font-size:14px;line-height:40px">0</div>
<div class="abs" style="left:930px;top:240px;width:187px;height:40px;border-right:1px solid #e4e4e4;border-bottom:1px solid #e4e4e4;padding-left:11px;color:#333;font-size:14px;line-height:40px">0</div>
<div class="abs" style="left:1116px;top:240px;width:187px;height:40px;border-right:1px solid #e4e4e4;border-bottom:1px solid #e4e4e4;padding-left:11px;color:#333;font-size:14px;line-height:40px">0.998</div>
<div class="abs" style="left:0px;top:280px;width:187px;height:40px;border-right:1px solid #e4e4e4;border-bottom:1px solid #e4e4e4;padding-left:10px;color:#333;font-size:14px;line-height:40px">地源热泵1</div>
<div class="abs" style="left:186px;top:280px;width:187px;height:40px;border-right:1px solid #e4e4e4;border-bottom:1px solid #e4e4e4;padding-left:11px;color:#333;font-size:14px;line-height:40px">2023-09-07</div>
<div class="abs" style="left:372px;top:280px;width:187px;height:40px;border-right:1px solid #e4e4e4;border-bottom:1px solid #e4e4e4;padding-left:11px;color:#333;font-size:14px;line-height:40px">946.85</div>
<div class="abs" style="left:558px;top:280px;width:187px;height:40px;border-right:1px solid #e4e4e4;border-bottom:1px solid #e4e4e4;padding-left:11px;color:#333;font-size:14px;line-height:40px">0</div>
<div class="abs" style="left:744px;top:280px;width:187px;height:40px;border-right:1px solid #e4e4e4;border-bottom:1px solid #e4e4e4;padding-left:11px;color:#333;font-size:14px;line-height:40px">0</div>
<div class="abs" style="left:930px;top:280px;width:187px;height:40px;border-right:1px solid #e4e4e4;border-bottom:1px solid #e4e4e4;padding-left:11px;color:#333;font-size:14px;line-height:40px">0</div>
<div class="abs" style="left:1116px;top:280px;width:187px;height:40px;border-right:1px solid #e4e4e4;border-bottom:1px solid #e4e4e4;padding-left:11px;color:#333;font-size:14px;line-height:40px">0.984</div>
<div class="abs" style="left:0px;top:320px;width:187px;height:40px;border-right:1px solid #e4e4e4;border-bottom:1px solid #e4e4e4;padding-left:10px;color:#333;font-size:14px;line-height:40px">地源热泵1</div>
<div class="abs" style="left:186px;top:320px;width:187px;height:40px;border-right:1px solid #e4e4e4;border-bottom:1px solid #e4e4e4;padding-left:11px;color:#333;font-size:14px;line-height:40px">2023-09-08</div>
<div class="abs" style="left:372px;top:320px;width:187px;height:40px;border-right:1px solid #e4e4e4;border-bottom:1px solid #e4e4e4;padding-left:11px;color:#333;font-size:14px;line-height:40px">1733.61</div>
<div class="abs" style="left:558px;top:320px;width:187px;height:40px;border-right:1px solid #e4e4e4;border-bottom:1px solid #e4e4e4;padding-left:11px;color:#333;font-size:14px;line-height:40px">0</div>
<div class="abs" style="left:744px;top:320px;width:187px;height:40px;border-right:1px solid #e4e4e4;border-bottom:1px solid #e4e4e4;padding-left:11px;color:#333;font-size:14px;line-height:40px">0</div>
<div class="abs" style="left:930px;top:320px;width:187px;height:40px;border-right:1px solid #e4e4e4;border-bottom:1px solid #e4e4e4;padding-left:11px;color:#333;font-size:14px;line-height:40px">0</div>
<div class="abs" style="left:1116px;top:320px;width:187px;height:40px;border-right:1px solid #e4e4e4;border-bottom:1px solid #e4e4e4;padding-left:11px;color:#333;font-size:14px;line-height:40px">0.998</div>
<div class="abs" style="left:0px;top:360px;width:187px;height:40px;border-right:1px solid #e4e4e4;border-bottom:1px solid #e4e4e4;padding-left:10px;color:#333;font-size:14px;line-height:40px">地源热泵1</div>
<div class="abs" style="left:186px;top:360px;width:187px;height:40px;border-right:1px solid #e4e4e4;border-bottom:1px solid #e4e4e4;padding-left:11px;color:#333;font-size:14px;line-height:40px">2023-09-09</div>
<div class="abs" style="left:372px;top:360px;width:187px;height:40px;border-right:1px solid #e4e4e4;border-bottom:1px solid #e4e4e4;padding-left:11px;color:#333;font-size:14px;line-height:40px">1761.61</div>
<div class="abs" style="left:558px;top:360px;width:187px;height:40px;border-right:1px solid #e4e4e4;border-bottom:1px solid #e4e4e4;padding-left:11px;color:#333;font-size:14px;line-height:40px">0</div>
<div class="abs" style="left:744px;top:360px;width:187px;height:40px;border-right:1px solid #e4e4e4;border-bottom:1px solid #e4e4e4;padding-left:11px;color:#333;font-size:14px;line-height:40px">0</div>
<div class="abs" style="left:930px;top:360px;width:187px;height:40px;border-right:1px solid #e4e4e4;border-bottom:1px solid #e4e4e4;padding-left:11px;color:#333;font-size:14px;line-height:40px">0</div>
<div class="abs" style="left:1116px;top:360px;width:187px;height:40px;border-right:1px solid #e4e4e4;border-bottom:1px solid #e4e4e4;padding-left:11px;color:#333;font-size:14px;line-height:40px">0.998</div>
<div class="abs" style="left:0px;top:400px;width:187px;height:40px;border-right:1px solid #e4e4e4;border-bottom:1px solid #e4e4e4;padding-left:10px;color:#333;font-size:14px;line-height:40px">地源热泵1</div>
<div class="abs" style="left:186px;top:400px;width:187px;height:40px;border-right:1px solid #e4e4e4;border-bottom:1px solid #e4e4e4;padding-left:11px;color:#333;font-size:14px;line-height:40px">2023-09-10</div>
<div class="abs" style="left:372px;top:400px;width:187px;height:40px;border-right:1px solid #e4e4e4;border-bottom:1px solid #e4e4e4;padding-left:11px;color:#333;font-size:14px;line-height:40px">255.19</div>
<div class="abs" style="left:558px;top:400px;width:187px;height:40px;border-right:1px solid #e4e4e4;border-bottom:1px solid #e4e4e4;padding-left:11px;color:#333;font-size:14px;line-height:40px">0</div>
<div class="abs" style="left:744px;top:400px;width:187px;height:40px;border-right:1px solid #e4e4e4;border-bottom:1px solid #e4e4e4;padding-left:11px;color:#333;font-size:14px;line-height:40px">0</div>
<div class="abs" style="left:930px;top:400px;width:187px;height:40px;border-right:1px solid #e4e4e4;border-bottom:1px solid #e4e4e4;padding-left:11px;color:#333;font-size:14px;line-height:40px">0</div>
<div class="abs" style="left:1116px;top:400px;width:187px;height:40px;border-right:1px solid #e4e4e4;border-bottom:1px solid #e4e4e4;padding-left:11px;color:#333;font-size:14px;line-height:40px">0.4</div>
</div>
<div class="abs" style="left:1893px;top:533px;width:1px;height:385px;background:#e4e4e4"></div>
<div class="abs" style="left:1886px;top:533px;width:7px;height:132px;border-radius:3px;background:#dedede"></div>
<div class="abs" style="left:583px;top:917px;width:1311px;height:1px;background:#e4e4e4"></div>
<svg class="abs" style="left:0;top:0" width="8" height="8" viewBox="0 0 8 8"><path d="M0 0H8A8 8 0 0 0 0 8Z" fill="#fbf8f8"/></svg>
<svg class="abs" style="left:0;top:950px" width="8" height="8" viewBox="0 0 8 8"><path d="M0 8V0A8 8 0 0 0 8 8Z" fill="#efefef"/></svg>
<svg class="abs" style="left:1904px;top:0" width="8" height="8" viewBox="0 0 8 8"><path d="M0 0A8 8 0 0 1 8 8" fill="none" stroke="#e2e2e2" stroke-width="1.5"/></svg>
<svg class="abs" style="left:1904px;top:950px" width="8" height="8" viewBox="0 0 8 8"><path d="M8 0V8H0A8 8 0 0 0 8 0Z" fill="#efefef"/></svg></body></html>
